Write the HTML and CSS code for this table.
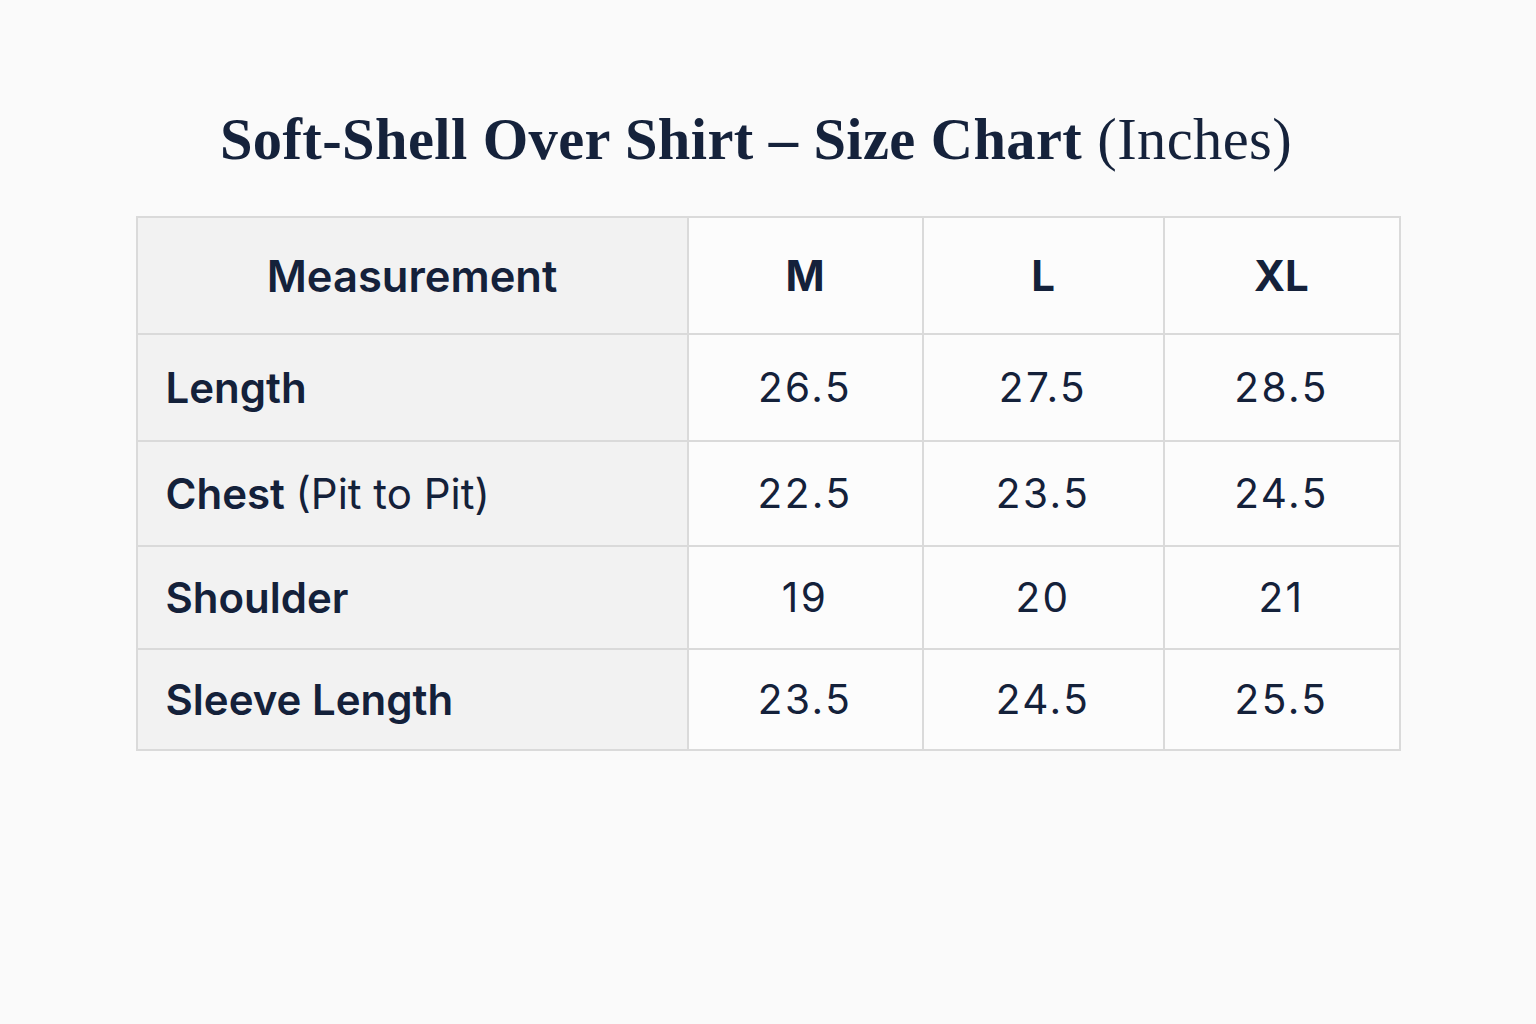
FILE: index.html
```html
<!DOCTYPE html>
<html lang="en">
<head>
<meta charset="utf-8">
<title>Soft-Shell Over Shirt – Size Chart</title>
<link rel="stylesheet" href="styles.css">
</head>
<body>
<main class="page">
  <h1 class="title"><span class="title-main">Soft-Shell Over Shirt – Size Chart</span> <span class="title-unit">(Inches)</span></h1>
  <table class="chart">
    <colgroup>
      <col class="col-label">
      <col class="col-m">
      <col class="col-l">
      <col class="col-xl">
    </colgroup>
    <thead>
      <tr class="row-head">
        <th class="label head-label">Measurement</th>
        <th>M</th>
        <th>L</th>
        <th>XL</th>
      </tr>
    </thead>
    <tbody>
      <tr class="row-1">
        <th class="label">Length</th>
        <td>26.5</td><td>27.5</td><td>28.5</td>
      </tr>
      <tr class="row-2">
        <th class="label">Chest <span class="light">(Pit to Pit)</span></th>
        <td>22.5</td><td>23.5</td><td>24.5</td>
      </tr>
      <tr class="row-3">
        <th class="label">Shoulder</th>
        <td>19</td><td>20</td><td>21</td>
      </tr>
      <tr class="row-4">
        <th class="label">Sleeve Length</th>
        <td>23.5</td><td>24.5</td><td>25.5</td>
      </tr>
    </tbody>
  </table>
</main>
</body>
</html>
```

FILE: styles.css
```css
html, body {
  margin: 0;
  padding: 0;
  background: #fafafa;
}

.page {
  display: flex;
  flex-direction: column;
  align-items: center;
  padding-top: 106px;
  color: #14213a;
}

.title {
  margin: 0 0 42px 0;
  font-family: "Liberation Serif", "Times New Roman", serif;
  font-size: 58.5px;
  line-height: 68px;
  font-weight: 700;
  color: #15223b;
  letter-spacing: 0.4px;
  padding-right: 24px;
}

.title-unit {
  font-weight: 400;
}

.chart {
  border-collapse: collapse;
  width: 1263px;
  font-family: Inter, Lato, "Noto Sans", sans-serif;
  table-layout: fixed;
}

.col-label { width: 551px; }
.col-m { width: 235px; }
.col-l { width: 241px; }
.col-xl { width: 236px; }

.chart th,
.chart td {
  border: 2px solid #dadada;
  text-align: center;
  padding: 0;
  color: #14213a;
  background: #fcfcfc;
}

.chart thead th {
  font-size: 42px;
  font-weight: 700;
  height: 115px;
}

.chart .label {
  background: #f2f2f2;
  text-align: left;
  padding-left: 28px;
  font-size: 42px;
  font-weight: 600;
}

.chart .head-label {
  text-align: center;
  padding-left: 0;
  font-size: 43.5px;
}

.chart .light {
  font-weight: 400;
}

.chart td {
  font-size: 40.5px;
  font-weight: 400;
  letter-spacing: 2.5px;
}

.row-1 th, .row-1 td { height: 105px; }
.row-2 th, .row-2 td { height: 103px; }
.row-3 th, .row-3 td { height: 101px; }
.row-4 th, .row-4 td { height: 99px; }
```
